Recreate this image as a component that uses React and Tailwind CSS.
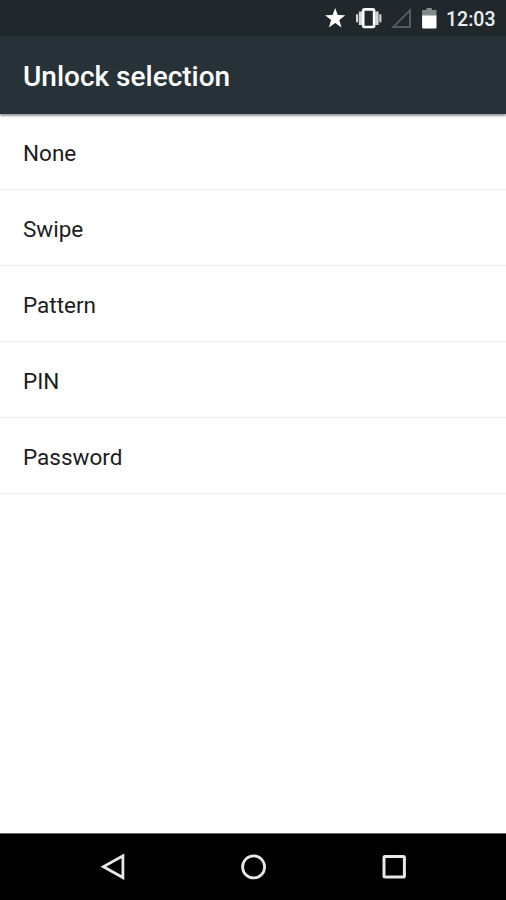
const options = ["None", "Swipe", "Pattern", "PIN", "Password"];

/**
 * @component StatusBar
 * Icons are drawn on one strip so that their spacing stays fixed.
 */
const StatusBar = () => (
  <div className="flex h-9 items-center justify-end bg-[#20282b] pr-[11px]">
    <svg width="122" height="36" viewBox="324 0 122 36" aria-hidden="true">
      <path
        fill="#fff"
        d="M335.2 8l2.6 7.1 7.5.2-6 4.6 2.2 7.5-6.3-4.4-6.3 4.4 2.2-7.5-6-4.6 7.5-.2z"
      />
      <path
        fill="#d3d6d7"
        d="M358.8 11.5h3.4v13.4h-3.4zM375.2 11.5h3.4v13.4h-3.4zM356 14.2h2.1v8H356zM379.3 14.2h2.1v8h-2.1z"
      />
      <rect x="363.2" y="9.4" width="10.9" height="17.6" rx="1.2" fill="#20282b" stroke="#fff" strokeWidth="2.6" />
      <path fill="none" stroke="#555d60" strokeWidth="2" d="M393.3 27H410V10.4z" />
      <path fill="#858a8c" d="M426.5 8h5.4v2h4.6v6h-14.4v-6h4.4z" />
      <path fill="#fff" d="M422.1 15.6h14.4v11.8q0 1-1 1h-12.4q-1 0-1-1z" />
    </svg>
    <span className="mt-1 w-[49px] text-[19.5px] leading-9 font-medium whitespace-nowrap text-[#eceeef]">
      12:03
    </span>
  </div>
);

const NavBar = () => (
  <nav className="flex h-[67px] items-center justify-center gap-[112px] border-t border-[#666] bg-black">
    <svg width="28" height="28" viewBox="0 0 28 28" fill="none" stroke="#e8e8e8" strokeWidth="2.8" aria-label="Back">
      <path d="M4.4 13.7L23.9 2.9v21.6z" />
    </svg>
    <svg width="28" height="28" viewBox="0 0 28 28" fill="none" stroke="#e8e8e8" strokeWidth="2.8" aria-label="Home">
      <circle cx="14.6" cy="13.9" r="11" />
    </svg>
    <svg width="28" height="28" viewBox="0 0 28 28" fill="none" stroke="#e8e8e8" strokeWidth="3" aria-label="Recents">
      <rect x="5" y="3.6" width="20.4" height="20.4" rx="1" />
    </svg>
  </nav>
);

const App = () => {
  return (
    <div className="flex h-[900px] w-[506px] flex-col overflow-hidden bg-white font-['Roboto',sans-serif]">
      <StatusBar />
      <header className="z-10 flex h-[78px] shrink-0 items-center bg-[#263238] px-[23px] pt-[3px] shadow-[0_2px_2px_rgba(0,0,0,0.4)]">
        <h1 className="text-[28px] leading-9 font-medium whitespace-nowrap text-white">
          Unlock selection
        </h1>
      </header>
      <ul className="flex-1">
        {options.map((option) => (
          <li
            key={option}
            className="flex h-[76px] items-center border-b border-[#ececec] px-[23px] pt-[3px] text-[22.5px] leading-8 text-[#1c1c1c]"
          >
            {option}
          </li>
        ))}
      </ul>
      <NavBar />
    </div>
  );
};

export default App;
